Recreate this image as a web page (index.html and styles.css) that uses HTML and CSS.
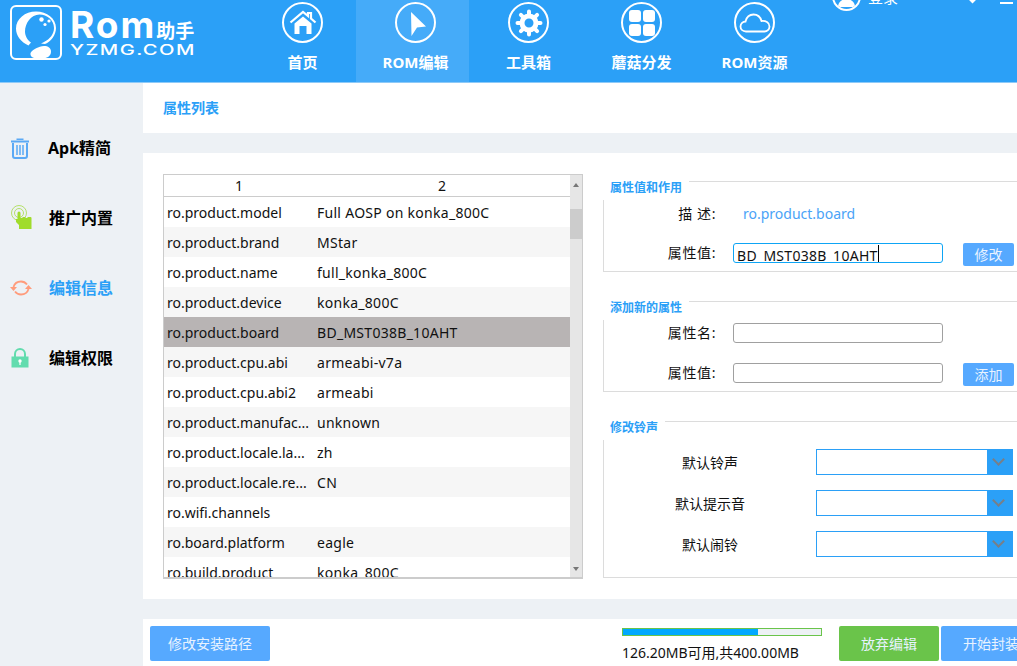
FILE: index.html
```html
<!DOCTYPE html>
<html lang="zh-CN">
  <head>
    <meta charset="UTF-8" />
    <meta name="viewport" content="width=device-width, initial-scale=1.0" />
    <title>Rom助手</title>
    <link rel="stylesheet" href="styles.css">
  </head>
  <body>
    <header class="header">
      <div class="logo">
        <svg class="logo-mark" width="52" height="55" viewBox="0 0 52 55">
          <rect x="1" y="1" width="50" height="53" rx="5" fill="none" stroke="#fff" stroke-width="2"/>
          <path fill-rule="evenodd" d="M26 6.500c-11 0-20 7.500-20 17 0 7.500 5 13.500 12.500 17l2.500-3c-4-2.500-6-7-6-11 0-8 6-17 14.500-17C37 9.500 44 15 44 23c0 6-4 11-10 14l-3 1.500 4 .5c6-2.500 11-9 11-16 0-9.500-9-16.500-20-16.500z" fill="#fff"/>
          <circle cx="31.500" cy="14.500" r="2.200" fill="#fff"/>
          <circle cx="39" cy="16" r="1.600" fill="#fff"/>
          <circle cx="35" cy="19.500" r="1.600" fill="#fff"/>
          <path d="M34 41c4 0 7 2 7 5.500 0 4-3 6.500-7 6.500H24c-2.500-.5-4-2.500-3.500-5 2.500-4 8-6.500 13.500-7z" fill="#fff"/>
        </svg>
        <div class="logo-text">
          <div class="logo-name">Rom<span class="logo-cn">助手</span></div>
          <div class="logo-url">YZMG.COM</div>
        </div>
      </div>
      <nav class="nav">
        <a class="nav-item">
          <span class="nav-icon">
            <svg width="28" height="28" viewBox="0 0 28 28">
              <path d="M1.500 13.500 14 3l5 4V4h3v5.500l4.500 4" fill="none" stroke="#fff" stroke-width="2.200"/>
              <path d="M5.500 14.500 14 7.500l8.500 7V25h-5v-8h-7v8h-5z" fill="#fff"/>
            </svg>
          </span>
          <span class="nav-label">首页</span>
        </a>
        <a class="nav-item active">
          <span class="nav-icon">
            <svg width="28" height="28" viewBox="0 0 28 28">
              <path d="M9 3 24 17.500l-9 1L9.500 27z" fill="#fff"/>
            </svg>
          </span>
          <span class="nav-label">ROM编辑</span>
        </a>
        <a class="nav-item">
          <span class="nav-icon">
            <svg width="28" height="28" viewBox="0 0 28 28">
              <circle cx="14" cy="14" r="7" fill="none" stroke="#fff" stroke-width="5"/>
              <g stroke="#fff" stroke-width="4" stroke-linecap="round">
                <path d="M14 2.500v3M14 22.500v3M2.500 14h3M22.500 14h3M5.900 5.900l2 2M20.100 20.100l2 2M5.900 22.100l2-2M20.100 7.900l2-2"/>
              </g>
            </svg>
          </span>
          <span class="nav-label">工具箱</span>
        </a>
        <a class="nav-item">
          <span class="nav-icon">
            <svg width="28" height="28" viewBox="0 0 28 28">
              <rect x="1" y="1" width="12" height="12" rx="3" fill="#fff"/>
              <rect x="15" y="1" width="12" height="12" rx="3" fill="#fff"/>
              <rect x="1" y="15" width="12" height="12" rx="3" fill="#fff"/>
              <rect x="15" y="15" width="12" height="12" rx="3" fill="#fff"/>
            </svg>
          </span>
          <span class="nav-label">蘑菇分发</span>
        </a>
        <a class="nav-item">
          <span class="nav-icon">
            <svg width="32" height="28" viewBox="0 0 32 28">
              <path d="M7 22.500c-3.500 0-5.500-2.500-5.500-5 0-3 2.500-5 5-5 1-4 4-7 8-7 4.500 0 7 3 8 6.500 4-.5 8 1.500 8 5.500 0 3-2.500 5-5 5z" fill="none" stroke="#fff" stroke-width="1.800"/>
            </svg>
          </span>
          <span class="nav-label">ROM资源</span>
        </a>
      </nav>
      <div class="user">
        <span class="user-avatar">
          <svg width="25" height="25" viewBox="0 0 25 25">
            <circle cx="12.500" cy="9" r="5" fill="#fff"/>
            <path d="M4 23c0-5 4-8 8.500-8s8.500 3 8.500 8z" fill="#fff"/>
          </svg>
        </span>
        <span class="user-name">登录</span>
        <span class="user-arrow"></span>
        <span class="user-min"></span>
      </div>
    </header>

    <div class="main">
      <aside class="sidebar">
        <div class="side-item">
          <svg width="20" height="22" viewBox="0 0 20 22">
            <path d="M6.500 3V1.500h7V3M1 3.500h18v2H1z" fill="#5aa9f5"/>
            <path d="M3 6v13c0 1 1 2 2 2h10c1 0 2-1 2-2V6" fill="none" stroke="#5aa9f5" stroke-width="2"/>
            <path d="M7 8v10M10 8v10M13 8v10" stroke="#5aa9f5" stroke-width="1.500"/>
          </svg>
          <span class="side-label">Apk精简</span>
        </div>
        <div class="side-item">
          <svg width="24" height="26" viewBox="0 0 24 26">
            <circle cx="9" cy="8" r="7.500" fill="none" stroke="#b5e06a" stroke-width="1"/>
            <circle cx="9" cy="8" r="4.500" fill="none" stroke="#b5e06a" stroke-width="1"/>
            <path d="M7.500 8a1.500 1.500 0 0 1 3 0v5h2v-1h3v1h2v-1h3a1 1 0 0 1 1 1v11H9v-4l-3-3v-3h1.500z" fill="#a0dc2c"/>
          </svg>
          <span class="side-label">推广内置</span>
        </div>
        <div class="side-item active">
          <svg width="22" height="16" viewBox="0 0 22 16">
            <path d="M3.500 7C4.500 3.500 7.500 1.500 11 1.500c2.500 0 4.500 1 6 3M18.500 9c-1 3.500-4 5.500-7.500 5.500-2.500 0-4.500-1-6-3" fill="none" stroke="#ff9c7c" stroke-width="1.800"/>
            <path d="M0 7h7L3.500 11zM15 9h7l-3.500-4z" fill="#ff9c7c"/>
          </svg>
          <span class="side-label">编辑信息</span>
        </div>
        <div class="side-item">
          <svg width="20" height="20" viewBox="0 0 20 20">
            <path d="M5 9V6a5 5 0 0 1 10 0v3" fill="none" stroke="#62dcae" stroke-width="2"/>
            <rect x="1.500" y="8.500" width="17" height="11" fill="#62dcae"/>
            <circle cx="10" cy="13" r="1.700" fill="#fff"/>
            <rect x="9.400" y="13" width="1.200" height="4" fill="#fff"/>
          </svg>
          <span class="side-label">编辑权限</span>
        </div>
      </aside>

      <div class="content">
        <div class="crumb">属性列表</div>

        <section class="panel">
          <div class="list">
            <div class="list-scroll">
              <div class="list-head">
                <span class="col-a">1</span>
                <span class="col-b">2</span>
              </div>
              <div class="row"><span class="col-a">ro.product.model</span><span class="col-b">Full AOSP on konka_800C</span></div>
              <div class="row"><span class="col-a">ro.product.brand</span><span class="col-b">MStar</span></div>
              <div class="row"><span class="col-a">ro.product.name</span><span class="col-b">full_konka_800C</span></div>
              <div class="row"><span class="col-a">ro.product.device</span><span class="col-b">konka_800C</span></div>
              <div class="row selected"><span class="col-a">ro.product.board</span><span class="col-b">BD_MST038B_10AHT</span></div>
              <div class="row"><span class="col-a">ro.product.cpu.abi</span><span class="col-b">armeabi-v7a</span></div>
              <div class="row"><span class="col-a">ro.product.cpu.abi2</span><span class="col-b">armeabi</span></div>
              <div class="row"><span class="col-a">ro.product.manufac...</span><span class="col-b">unknown</span></div>
              <div class="row"><span class="col-a">ro.product.locale.la...</span><span class="col-b">zh</span></div>
              <div class="row"><span class="col-a">ro.product.locale.re...</span><span class="col-b">CN</span></div>
              <div class="row"><span class="col-a">ro.wifi.channels</span><span class="col-b"></span></div>
              <div class="row"><span class="col-a">ro.board.platform</span><span class="col-b">eagle</span></div>
              <div class="row"><span class="col-a">ro.build.product</span><span class="col-b">konka_800C</span></div>
            </div>
            <div class="scrollbar">
              <span class="scroll-up"></span>
              <span class="scroll-thumb"></span>
              <span class="scroll-down"></span>
            </div>
          </div>

          <div class="forms">
            <div class="group">
              <div class="legend"><span>属性值和作用</span></div>
              <div class="group-box">
                <div class="field field-desc">
                  <span class="field-label">描 述:</span>
                  <span class="field-value">ro.product.board</span>
                </div>
                <div class="field">
                  <span class="field-label">属性值:</span>
                  <span class="input focused">BD_MST038B_10AHT</span>
                  <button class="btn-small">修改</button>
                </div>
              </div>
            </div>

            <div class="group">
              <div class="legend"><span>添加新的属性</span></div>
              <div class="group-box">
                <div class="field field-name">
                  <span class="field-label">属性名:</span>
                  <span class="input"></span>
                </div>
                <div class="field">
                  <span class="field-label">属性值:</span>
                  <span class="input"></span>
                  <button class="btn-small">添加</button>
                </div>
              </div>
            </div>

            <div class="group group-ring">
              <div class="legend"><span>修改铃声</span></div>
              <div class="group-box">
                <div class="combo-row">
                  <span class="combo-label">默认铃声</span>
                  <span class="combo"><span class="combo-arrow"></span></span>
                </div>
                <div class="combo-row">
                  <span class="combo-label">默认提示音</span>
                  <span class="combo"><span class="combo-arrow"></span></span>
                </div>
                <div class="combo-row">
                  <span class="combo-label">默认闹铃</span>
                  <span class="combo"><span class="combo-arrow"></span></span>
                </div>
              </div>
            </div>
          </div>
        </section>

        <footer class="footer">
          <button class="btn btn-path">修改安装路径</button>
          <div class="storage">
            <div class="storage-bar"><div class="storage-fill" style="width: 68%"></div></div>
            <div class="storage-text">126.20MB可用,共400.00MB</div>
          </div>
          <button class="btn btn-green">放弃编辑</button>
          <button class="btn btn-pack">开始封装</button>
        </footer>
      </div>
    </div>
  </body>
</html>
```

FILE: styles.css
```css
* {
  box-sizing: border-box;
}
html,
body {
  margin: 0;
  height: 666px;
  overflow: hidden;
}
body {
  width: 1017px;
  background-color: #fff;
  color: #111;
  font-family: "Noto Sans", "Noto Sans CJK SC", sans-serif;
  font-size: 14px;
}

/* header */
.header {
  display: flex;
  height: 83px;
  background-color: #2ba0f7;
  border-bottom: 1px solid #8ecaf8;
}
.logo {
  display: flex;
  width: 243px;
  padding: 5px 0 0 10px;
  color: #fff;
}
.logo-text {
  margin-left: 8px;
}
.logo-name {
  height: 37px;
  margin-top: 1px;
  font-family: "Inter", sans-serif;
  font-size: 37px;
  font-weight: 700;
  line-height: 37px;
  letter-spacing: 2px;
}
.logo-cn {
  font-family: "Noto Sans CJK SC", sans-serif;
  font-size: 19px;
  font-weight: 700;
  letter-spacing: 0;
}
.logo-url {
  margin-top: -1px;
  font-family: "Inter", sans-serif;
  font-size: 14px;
  font-weight: 500;
  line-height: 15px;
  letter-spacing: 1px;
  transform: scaleX(1.44);
  transform-origin: left;
}
.nav {
  display: flex;
}
.nav-item {
  display: flex;
  flex-direction: column;
  align-items: center;
  width: 113px;
  padding: 2px 0 0 6px;
  color: #fff;
}
.nav-item.active {
  background-color: #45abf9;
}
.nav-icon {
  display: flex;
  align-items: center;
  justify-content: center;
  width: 41px;
  height: 41px;
  border: 2px solid #fff;
  border-radius: 50%;
}
.nav-label {
  margin-top: 9px;
  font-size: 15px;
  font-weight: 700;
  line-height: 20px;
  white-space: nowrap;
}
.user {
  display: flex;
  align-items: center;
  height: 29px;
  margin-top: -18px;
  margin-left: 24px;
  color: #fff;
}
.user-avatar {
  display: flex;
  width: 29px;
  height: 29px;
  border: 2px solid #fff;
  border-radius: 50%;
  overflow: hidden;
}
.user-name {
  margin-left: 7px;
  font-size: 15px;
}
.user-arrow {
  width: 7px;
  height: 7px;
  margin-top: 4px;
  margin-left: 71px;
  background-color: #fff;
  transform: rotate(45deg);
}
.user-min {
  width: 13px;
  height: 2px;
  margin-top: 12px;
  margin-left: 24px;
  background-color: #fff;
}

/* layout */
.main {
  display: flex;
  height: 583px;
}
.sidebar {
  width: 143px;
  padding-top: 30px;
  background-color: #edf1f5;
}
.side-item {
  display: flex;
  align-items: center;
  height: 70px;
  padding-left: 10px;
  color: #000;
}
.side-item svg {
  flex: none;
}
.side-item:nth-child(1) .side-label { margin-left: 18px; }
.side-item:nth-child(2) .side-label { margin-left: 15px; }
.side-item:nth-child(3) .side-label { margin-left: 17px; }
.side-item:nth-child(4) .side-label { margin-left: 19px; }
.side-label {
  padding-bottom: 2px;
  font-size: 16px;
  font-weight: 700;
}
.side-item.active .side-label {
  color: #2ba0f7;
}
.content {
  display: flex;
  flex-direction: column;
  flex: 1;
  min-width: 0;
  background-color: #edf1f5;
}
.crumb {
  height: 50px;
  padding-left: 20px;
  background-color: #fff;
  color: #2ba0f7;
  font-size: 14px;
  font-weight: 700;
  line-height: 50px;
}
.panel {
  display: flex;
  height: 446px;
  margin-top: 20px;
  padding: 21px 0 0 20px;
  background-color: #fff;
  overflow: hidden;
}

/* property list */
.list {
  display: flex;
  flex: none;
  width: 420px;
  height: 405px;
  border: 1px solid #ccc;
  border-bottom-width: 2px;
}
.list-scroll {
  width: 406px;
  overflow: hidden;
}
.list-head {
  display: flex;
  height: 22px;
  border-bottom: 1px solid #ccc;
  line-height: 22px;
  text-align: center;
}
.list-head .col-a {
  width: 150px;
}
.list-head .col-b {
  flex: 1;
}
.row {
  display: flex;
  height: 30px;
  padding-left: 3px;
  line-height: 32px;
}
.row:nth-child(odd) {
  background-color: #f6f6f6;
}
.row.selected {
  background-color: #b8b4b4;
}
.row .col-a {
  width: 150px;
}
.row .col-b {
  letter-spacing: 0.28px;
}
.scrollbar {
  display: flex;
  flex-direction: column;
  align-items: center;
  width: 12px;
  background-color: #e6e6e6;
}
.scroll-up {
  height: 0;
  margin-top: 8px;
  border: 3px solid transparent;
  border-top: 0;
  border-bottom: 4px solid #777;
}
.scroll-thumb {
  width: 100%;
  height: 30px;
  margin-top: 22px;
  background-color: #ccc;
}
.scroll-down {
  height: 0;
  margin-top: auto;
  margin-bottom: 6px;
  border: 3px solid transparent;
  border-bottom: 0;
  border-top: 4px solid #777;
}

/* right side forms */
.forms {
  flex: none;
  width: 420px;
  margin-left: 20px;
  padding-top: 7px;
}
.group + .group {
  margin-top: 29px;
}
.legend {
  display: flex;
  height: 19px;
  padding-left: 7px;
  color: #2ba0f7;
  font-size: 12px;
  font-weight: 700;
  white-space: nowrap;
}
.legend span {
  margin-top: 1px;
  line-height: 12px;
}
.legend::after {
  content: "";
  flex: 1;
  height: 1px;
  margin-left: 7px;
  background-color: #dcdcdc;
}
.group-box {
  height: 72px;
  border-left: 1px solid #dcdcdc;
  border-bottom: 1px solid #dcdcdc;
}
.group-ring .group-box {
  height: 138px;
  padding-top: 9px;
}
.field {
  display: flex;
  align-items: flex-start;
  height: 28px;
}
.field-desc {
  height: 43px;
  padding-top: 4px;
}
.field-name {
  height: 43px;
  padding-top: 3px;
}
.field-label {
  width: 112px;
  text-align: right;
  line-height: 20px;
  letter-spacing: 0.6px;
}
.field-value {
  margin-left: 27px;
  color: #4aa3f7;
  line-height: 20px;
}
.input {
  display: block;
  flex: none;
  width: 210px;
  height: 20px;
  margin-left: 17px;
  padding-left: 3px;
  border: 1px solid #a0a0a0;
  border-radius: 3px;
  line-height: 23px;
  letter-spacing: 0.28px;
  white-space: nowrap;
  overflow: hidden;
}
.input.focused {
  border-color: #0ea5f5;
  position: relative;
}
.input.focused::after {
  content: "";
  position: absolute;
  top: 1px;
  left: 144px;
  width: 1px;
  height: 17px;
  background-color: #000;
}
.btn-small {
  flex: none;
  width: 51px;
  height: 23px;
  margin-left: 20px;
  padding: 0 0 2px;
  border: none;
  border-radius: 2px;
  background-color: #56a9ff;
  color: #e8f3ff;
  font-family: inherit;
  font-size: 14px;
}
.combo-row {
  display: flex;
  align-items: center;
  height: 26px;
  margin-bottom: 15px;
}
.combo-label {
  width: 212px;
  text-align: center;
}
.combo {
  display: flex;
  justify-content: flex-end;
  width: 197px;
  height: 26px;
  border: 1px solid #2ba0f7;
}
.combo-arrow {
  position: relative;
  width: 25px;
  background-color: #2ba0f7;
}
.combo-arrow::after {
  content: "";
  position: absolute;
  top: 5px;
  left: 7px;
  width: 7px;
  height: 7px;
  border-right: 2px solid #787f88;
  border-bottom: 2px solid #787f88;
  transform: rotate(45deg);
}

/* bottom bar */
.footer {
  display: flex;
  height: 47px;
  margin-top: 20px;
  padding: 7px 0 0 7px;
  background-color: #fff;
}
.btn {
  flex: none;
  height: 35px;
  padding: 0 0 2px;
  border: none;
  border-radius: 2px;
  color: #e8f3ff;
  font-family: inherit;
  font-size: 14px;
}
.btn-path {
  width: 120px;
  background-color: #56a9ff;
}
.storage {
  flex: none;
  width: 200px;
  margin-left: 352px;
  margin-top: 2px;
}
.storage-bar {
  height: 8px;
  border: 1px solid #6ac44a;
  background-color: #edf1f5;
}
.storage-fill {
  height: 100%;
  background-color: #00a8ff;
}
.storage-text {
  margin-top: 5px;
  line-height: 24px;
  white-space: nowrap;
}
.btn-green {
  width: 100px;
  margin-left: 17px;
  background-color: #6ac44a;
}
.btn-pack {
  width: 100px;
  margin-left: 2px;
  background-color: #56a9ff;
}
```
